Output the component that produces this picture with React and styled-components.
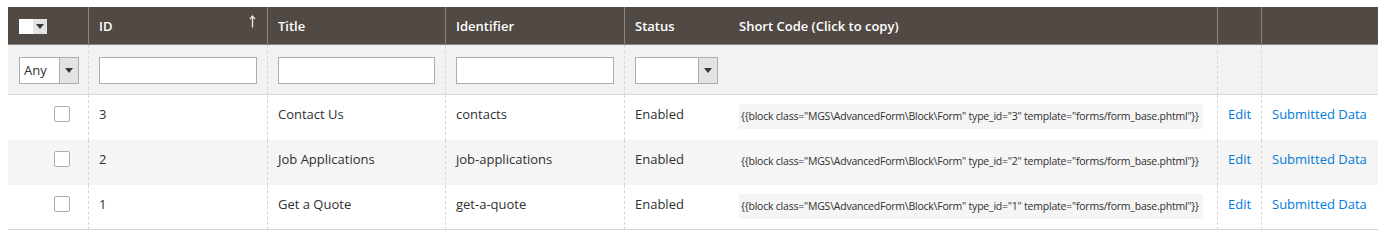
import React from "react";
import styled, { createGlobalStyle } from "styled-components";

const Global = createGlobalStyle`
  body {
    margin: 0;
    background: #ffffff;
    font-family: "Open Sans", "Noto Sans", sans-serif;
    color: #303030;
  }
`;

const Page = styled.div`
  padding: 7px 11px 0 8px;
`;

const Grid = styled.table`
  width: 1370px;
  border-collapse: separate;
  border-spacing: 0;
  table-layout: fixed;
  font-size: 13px;
`;

const Th = styled.th`
  height: 38px;
  box-sizing: border-box;
  background: #514943;
  color: #ffffff;
  font-weight: 600;
  font-size: 13px;
  text-align: left;
  padding: 0 10px;
  border-bottom: 1px solid #8a837f;
  border-left: ${(p) => (p.$noLeft ? "none" : "1px solid #8a837f")};
  vertical-align: middle;
`;

const ThInner = styled.div`
  display: flex;
  align-items: center;
  justify-content: space-between;
`;

const SortArrow = styled.svg`
  display: block;
  margin-top: -8px;
  margin-right: 1px;
`;

const FilterTd = styled.td`
  height: 50px;
  box-sizing: border-box;
  background: #f2f2f2;
  padding: 0 10px;
  border-bottom: 1px solid #d6d6d6;
  border-left: ${(p) => (p.$noLeft ? "none" : "1px dashed #d6d6d6")};
  vertical-align: middle;
`;

const Td = styled.td`
  height: 45px;
  box-sizing: border-box;
  background: ${(p) => (p.$even ? "#f5f5f5" : "#ffffff")};
  padding: ${(p) => (p.$code ? "9px 10px 0 10px" : "10px 10px 0 10px")};
  border-left: ${(p) => (p.$noLeft ? "none" : "1px dashed #d6d6d6")};
  border-bottom: ${(p) => (p.$last ? "1px solid #d6d6d6" : "none")};
  vertical-align: top;
  line-height: 18px;
  color: #303030;
  white-space: nowrap;
`;

const MassSelect = styled.div`
  display: flex;
  width: 28px;
  height: 15px;
  margin-left: 1px;
  margin-top: 1px;
`;

const MassBox = styled.div`
  width: 14px;
  height: 15px;
  background: #ffffff;
`;

const MassArrow = styled.div`
  width: 14px;
  height: 15px;
  background: #e3e3e3;
  display: flex;
  align-items: center;
  justify-content: center;
`;

const Triangle = styled.span`
  width: 0;
  height: 0;
  border-left: 4px solid transparent;
  border-right: 4px solid transparent;
  border-top: 5px solid #41362f;
`;

const Select = styled.div`
  display: flex;
  width: ${(p) => p.$w}px;
  height: 27px;
  box-sizing: border-box;
  border: 1px solid #adadad;
  background: #ffffff;
  margin-left: ${(p) => p.$ml || 0}px;
  margin-top: 1px;
`;

const SelectValue = styled.div`
  flex: 1;
  font-size: 13px;
  line-height: 25px;
  padding-left: 4px;
  color: #303030;
`;

const SelectArrow = styled.div`
  width: 18px;
  background: #e3e3e3;
  border-left: 1px solid #adadad;
  display: flex;
  align-items: center;
  justify-content: center;
`;

const TextInput = styled.div`
  width: 100%;
  height: 27px;
  box-sizing: border-box;
  border: 1px solid #adadad;
  background: #ffffff;
  margin-top: 1px;
`;

const Checkbox = styled.div`
  width: 16px;
  height: 16px;
  box-sizing: border-box;
  border: 1px solid #adadad;
  border-radius: 2px;
  background: #ffffff;
  margin-left: 36px;
  margin-top: 1px;
`;

const CodeBox = styled.div`
  display: inline-block;
  width: 464px;
  height: 25px;
  box-sizing: border-box;
  background: #f5f5f5;
  font-size: 10.5px;
  line-height: 25px;
  padding-left: 2px;
  letter-spacing: -0.22px;
  color: #303030;
  overflow: hidden;
  cursor: pointer;
`;

const Link = styled.a`
  color: #007bdb;
  text-decoration: none;
  cursor: pointer;
`;

const rows = [
  { id: 3, title: "Contact Us", identifier: "contacts" },
  { id: 2, title: "Job Applications", identifier: "job-applications" },
  { id: 1, title: "Get a Quote", identifier: "get-a-quote" },
];

export default function App() {
  return (
    <Page>
      <Global />
      <Grid>
        <colgroup>
          <col style={{ width: 80 }} />
          <col style={{ width: 179 }} />
          <col style={{ width: 178 }} />
          <col style={{ width: 179 }} />
          <col style={{ width: 105 }} />
          <col style={{ width: 488 }} />
          <col style={{ width: 44 }} />
          <col style={{ width: 117 }} />
        </colgroup>
        <thead>
          <tr>
            <Th $noLeft>
              <MassSelect>
                <MassBox />
                <MassArrow>
                  <Triangle />
                </MassArrow>
              </MassSelect>
            </Th>
            <Th>
              <ThInner>
                <span>ID</span>
                <SortArrow width="7" height="13" viewBox="0 0 7 13">
                  <path d="M3.5 1.5 V12.5" stroke="#f4ecea" strokeWidth="1.3" fill="none" />
                  <path d="M1 4.2 L3.5 1 L6 4.2" stroke="#f4ecea" strokeWidth="1.2" fill="none" />
                </SortArrow>
              </ThInner>
            </Th>
            <Th>Title</Th>
            <Th>Identifier</Th>
            <Th>Status</Th>
            <Th $noLeft>Short Code (Click to copy)</Th>
            <Th></Th>
            <Th></Th>
          </tr>
          <tr>
            <FilterTd $noLeft>
              <Select $w={60} $ml={1}>
                <SelectValue>Any</SelectValue>
                <SelectArrow>
                  <Triangle />
                </SelectArrow>
              </Select>
            </FilterTd>
            <FilterTd>
              <TextInput />
            </FilterTd>
            <FilterTd>
              <TextInput />
            </FilterTd>
            <FilterTd>
              <TextInput />
            </FilterTd>
            <FilterTd>
              <Select $w={83}>
                <SelectValue />
                <SelectArrow>
                  <Triangle />
                </SelectArrow>
              </Select>
            </FilterTd>
            <FilterTd $noLeft />
            <FilterTd />
            <FilterTd />
          </tr>
        </thead>
        <tbody>
          {rows.map((r, i) => {
            const even = i % 2 === 1;
            const last = i === rows.length - 1;
            return (
              <tr key={r.id}>
                <Td $noLeft $even={even} $last={last}>
                  <Checkbox />
                </Td>
                <Td $even={even} $last={last}>{r.id}</Td>
                <Td $even={even} $last={last}>{r.title}</Td>
                <Td $even={even} $last={last}>{r.identifier}</Td>
                <Td $even={even} $last={last}>Enabled</Td>
                <Td $noLeft $code $even={even} $last={last}>
                  <CodeBox>
                    {`{{block class="MGS\\AdvancedForm\\Block\\Form" type_id="${r.id}" template="forms/form_base.phtml"}}`}
                  </CodeBox>
                </Td>
                <Td $even={even} $last={last}>
                  <Link>Edit</Link>
                </Td>
                <Td $even={even} $last={last}>
                  <Link>Submitted Data</Link>
                </Td>
              </tr>
            );
          })}
        </tbody>
      </Grid>
    </Page>
  );
}
